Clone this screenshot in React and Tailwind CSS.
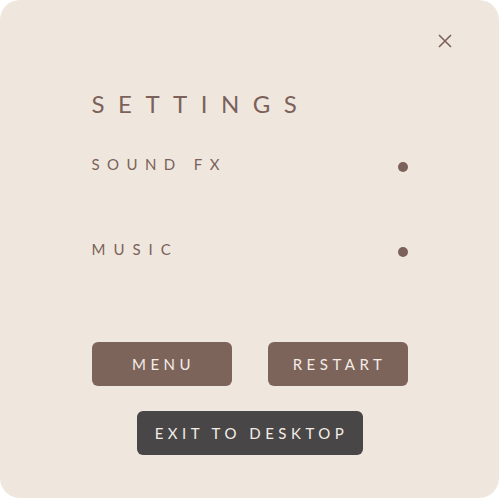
export default function App() {
  return (
    <div className="w-[499px] h-[498px] bg-white" style={{ fontFamily: "Lato, 'Open Sans', sans-serif" }}>
      <div className="relative h-full w-full rounded-[20px] bg-[#efe7de]">
        <button className="absolute top-[34px] right-[47px] w-[14px] h-[14px] text-[#7b6159]" aria-label="close">
          <svg viewBox="0 0 14 14" width="14" height="14" fill="none" stroke="currentColor" strokeWidth="1.6">
            <path d="M1 1L13 13M13 1L1 13" />
          </svg>
        </button>
        <div className="mx-auto w-[316px] pt-[90px]">
          <h1 className="text-[24px] leading-[28px] tracking-[13.5px] text-[#7b6159] font-normal">SETTINGS</h1>
          <div className="mt-[36px] flex items-start justify-between h-[20px]">
            <span className="text-[15px] leading-[20px] tracking-[7.4px] text-[#7b6159]">SOUND FX</span>
            <span className="mt-[8px] w-[10px] h-[10px] rounded-full bg-[#7b6159]" />
          </div>
          <div className="mt-[65px] flex items-start justify-between h-[20px]">
            <span className="text-[15px] leading-[20px] tracking-[8px] text-[#7b6159]">MUSIC</span>
            <span className="mt-[8px] w-[10px] h-[10px] rounded-full bg-[#7b6159]" />
          </div>
          <div className="mt-[83px] flex justify-between">
            <button className="w-[140px] h-[44px] rounded-[6px] bg-[#7d645b] text-[#f4ede6] text-[15px] tracking-[4.5px] pl-[4px]">MENU</button>
            <button className="w-[140px] h-[44px] rounded-[6px] bg-[#7d645b] text-[#f4ede6] text-[15px] tracking-[4.5px] pl-[4px]">RESTART</button>
          </div>
          <div className="mt-[25px] flex justify-center">
            <button className="w-[226px] h-[44px] rounded-[6px] bg-[#484646] text-[#f4ede6] text-[15px] tracking-[4.5px] pl-[4px]">EXIT TO DESKTOP</button>
          </div>
        </div>
      </div>
    </div>
  );
}
